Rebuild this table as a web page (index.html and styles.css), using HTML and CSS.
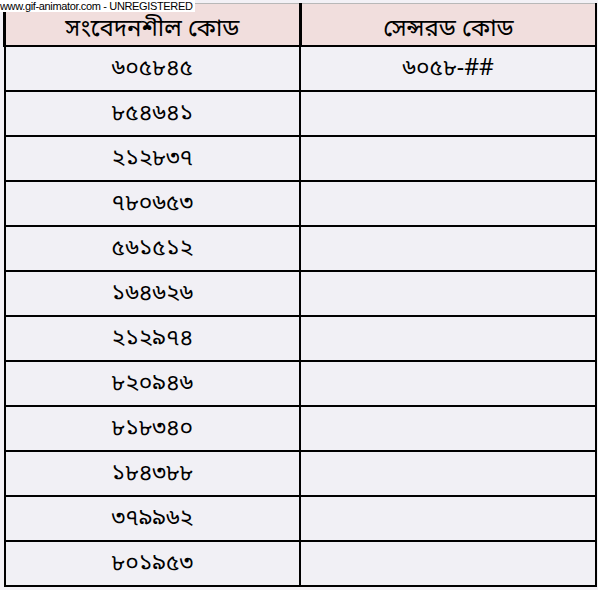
FILE: index.html
```html
<!DOCTYPE html>
<html lang="bn">
<head>
<meta charset="utf-8">
<link rel="stylesheet" href="styles.css">
</head>
<body>
<div class="page">
  <div class="watermark">www.gif-animator.com - UNREGISTERED</div>
  <table class="codes">
    <thead>
      <tr><th>সংবেদনশীল কোড</th><th>সেন্সরড কোড</th></tr>
    </thead>
    <tbody>
      <tr><td>৬০৫৮৪৫</td><td>৬০৫৮-##</td></tr>
      <tr><td>৮৫৪৬৪১</td><td></td></tr>
      <tr><td>২১২৮৩৭</td><td></td></tr>
      <tr><td>৭৮০৬৫৩</td><td></td></tr>
      <tr><td>৫৬১৫১২</td><td></td></tr>
      <tr><td>১৬৪৬২৬</td><td></td></tr>
      <tr><td>২১২৯৭৪</td><td></td></tr>
      <tr><td>৮২০৯৪৬</td><td></td></tr>
      <tr><td>৮১৮৩৪০</td><td></td></tr>
      <tr><td>১৮৪৩৮৮</td><td></td></tr>
      <tr><td>৩৭৯৯৬২</td><td></td></tr>
      <tr><td>৮০১৯৫৩</td><td></td></tr>
    </tbody>
  </table>
</div>
</body>
</html>
```
FILE: styles.css
```css
html, body {
  margin: 0;
  padding: 0;
  background: #f3f1f6;
}
.page {
  position: relative;
  width: 598px;
  height: 590px;
  padding: 3px 0 0 3px;
  box-sizing: border-box;
}
.watermark {
  position: absolute;
  left: 0;
  top: 0;
  background: #ffffff;
  color: #000;
  font-family: "Liberation Sans", Arial, sans-serif;
  font-size: 11px;
  letter-spacing: -0.35px;
  line-height: 12px;
  padding: 0 2px 0 0;
  z-index: 2;
}
.codes {
  border-collapse: collapse;
  width: 594px;
  table-layout: fixed;
  font-family: "Noto Sans Bengali", "Lohit Bengali", "Noto Serif Bengali", "Mukti", sans-serif;
  color: #000;
}
.codes th, .codes td {
  border: 2px solid #000;
  text-align: center;
  padding: 0;
  height: 43px;
  font-weight: normal;
}
.codes th {
  background: #f1dedd;
  font-size: 24px;
  line-height: 28px;
  height: 29px;
  padding-top: 12px;
  vertical-align: top;
  border-top: 1px solid #b8b8b8;
  border-left-width: 3px;
}
.codes td {
  background: #f1f0f5;
  font-size: 23px;
}
```
